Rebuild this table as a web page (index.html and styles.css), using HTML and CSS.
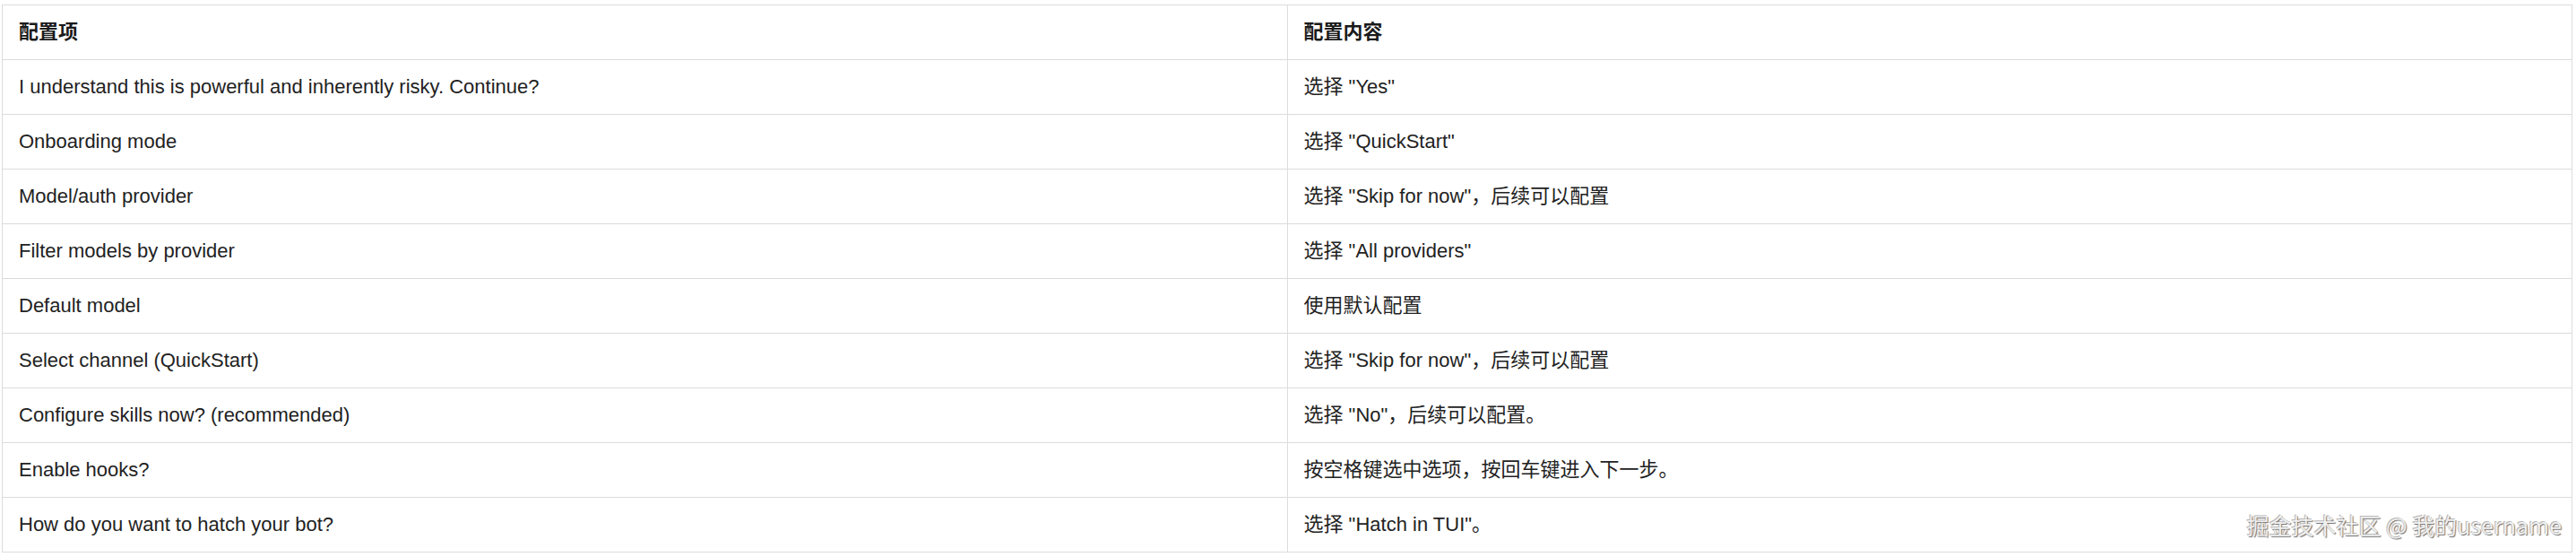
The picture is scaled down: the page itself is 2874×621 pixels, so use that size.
FILE: index.html
```html
<!DOCTYPE html>
<html lang="zh-CN">
<head>
<meta charset="utf-8">
<title>配置项</title>
<link rel="stylesheet" href="styles.css">
</head>
<body>
<div class="page">
  <table class="config-table">
    <thead>
      <tr><th>配置项</th><th>配置内容</th></tr>
    </thead>
    <tbody>
      <tr><td>I understand this is powerful and inherently risky. Continue?</td><td>选择 "Yes"</td></tr>
      <tr><td>Onboarding mode</td><td>选择 "QuickStart"</td></tr>
      <tr><td>Model/auth provider</td><td>选择 "Skip for now"，后续可以配置</td></tr>
      <tr><td>Filter models by provider</td><td>选择 "All providers"</td></tr>
      <tr><td>Default model</td><td>使用默认配置</td></tr>
      <tr><td>Select channel (QuickStart)</td><td>选择 "Skip for now"，后续可以配置</td></tr>
      <tr><td>Configure skills now? (recommended)</td><td>选择 "No"，后续可以配置。</td></tr>
      <tr><td>Enable hooks?</td><td>按空格键选中选项，按回车键进入下一步。</td></tr>
      <tr><td>How do you want to hatch your bot?</td><td>选择 "Hatch in TUI"。</td></tr>
    </tbody>
  </table>
  <div class="watermark">掘金技术社区 @ 我的username</div>
</div>
</body>
</html>
```

FILE: styles.css
```css
html, body {
  margin: 0;
  padding: 0;
  background: #ffffff;
}

.page {
  position: relative;
  padding: 5px 4px 0 2px;
  font-family: "Liberation Sans", Arial, "Noto Sans CJK SC", sans-serif;
  color: #222222;
}

.config-table {
  width: 100%;
  border-collapse: collapse;
  table-layout: fixed;
  font-size: 22px;
}

.config-table th,
.config-table td {
  border: 1px solid #dcdcdc;
  height: 61px;
  box-sizing: border-box;
  padding: 0 18px;
  text-align: left;
  vertical-align: middle;
  line-height: 26px;
}

.config-table th {
  font-weight: bold;
  color: #1a1a1a;
}

.watermark {
  position: absolute;
  right: 16px;
  bottom: 16px;
  font-family: "Noto Sans CJK SC", "Liberation Sans", sans-serif;
  font-size: 25px;
  line-height: 30px;
  color: #f0f0f0;
  text-shadow: 1px 1px 1px #6f6f6f, -1px -1px 0 #b8b8b8;
}
```
